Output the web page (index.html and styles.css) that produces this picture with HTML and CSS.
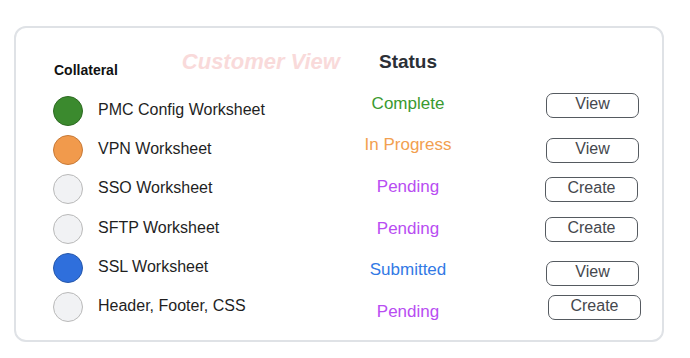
FILE: index.html
```html
<!DOCTYPE html>
<html lang="en">
<head>
<meta charset="utf-8">
<title>Collateral</title>
<link rel="stylesheet" href="styles.css">
</head>
<body>
<div class="card">
  <div class="head">
    <div class="head-col1">
      <span class="collateral-title">Collateral</span>
      <span class="watermark">Customer View</span>
    </div>
    <div class="head-col2">Status</div>
  </div>
  <div class="body">
    <div class="col col-items">
      <div class="item"><span class="dot dot-green"></span><span class="label">PMC Config Worksheet</span></div>
      <div class="item"><span class="dot dot-orange"></span><span class="label">VPN Worksheet</span></div>
      <div class="item"><span class="dot dot-gray"></span><span class="label">SSO Worksheet</span></div>
      <div class="item"><span class="dot dot-gray"></span><span class="label">SFTP Worksheet</span></div>
      <div class="item"><span class="dot dot-blue"></span><span class="label">SSL Worksheet</span></div>
      <div class="item"><span class="dot dot-gray"></span><span class="label">Header, Footer, CSS</span></div>
    </div>
    <div class="col col-status">
      <div class="status s-complete">Complete</div>
      <div class="status s-progress">In Progress</div>
      <div class="status s-pending">Pending</div>
      <div class="status s-pending">Pending</div>
      <div class="status s-submitted">Submitted</div>
      <div class="status s-pending">Pending</div>
    </div>
    <div class="col col-actions">
      <button class="btn">View</button>
      <button class="btn">View</button>
      <button class="btn">Create</button>
      <button class="btn">Create</button>
      <button class="btn">View</button>
      <button class="btn">Create</button>
    </div>
  </div>
</div>
</body>
</html>
```

FILE: styles.css
```css
* { box-sizing: border-box; }
html, body { background: #ffffff; }
body {
  margin: 0;
  padding: 26px 0 0 14px;
  font-family: "Liberation Sans", Arial, sans-serif;
  color: #222;
}
.card {
  width: 650px;
  height: 316px;
  border: 2px solid #dfe2e6;
  border-radius: 12px;
  padding: 21px 0 0 37px;
}
.head {
  display: flex;
  height: 26px;
}
.head-col1 {
  width: 295px;
  display: flex;
  align-items: flex-start;
}
.collateral-title {
  font-size: 14px;
  font-weight: bold;
  line-height: 16px;
  margin-top: 13px;
  color: #111;
  padding-left: 1px;
}
.watermark {
  font-size: 22px;
  line-height: 26px;
  font-weight: bold;
  font-style: italic;
  color: #f9dada;
  margin-left: 64px;
}
.head-col2 {
  width: 120px;
  text-align: center;
  font-size: 19px;
  line-height: 22px;
  margin-top: 2px;
  font-weight: bold;
  color: #2b2f36;
}
.body {
  display: flex;
}
.col { display: flex; flex-direction: column; }
.col-items {
  width: 295px;
  padding-top: 16px;
}
.item {
  height: 39.3px;
  display: flex;
  align-items: center;
}
.dot {
  width: 30px;
  height: 30px;
  border-radius: 50%;
  border: 1px solid #bdbdbd;
  flex: none;
}
.dot-green { background: #3b8a2e; border-color: #2d6a22; }
.dot-orange { background: #f19a4c; border-color: #c77a38; }
.dot-gray { background: #f1f2f4; border-color: #b9b9b9; }
.dot-blue { background: #2f6fdc; border-color: #2657aa; }
.label {
  margin-left: 15px;
  font-size: 16px;
  line-height: 18px;
  margin-bottom: 2px;
  color: #1f1f1f;
}
.col-status {
  width: 120px;
  padding-top: 8px;
}
.status {
  height: 41.6px;
  display: flex;
  align-items: center;
  justify-content: center;
  font-size: 17px;
}
.s-complete { color: #3a9a30; }
.s-progress { color: #f2a050; }
.s-pending { color: #b84df2; }
.s-submitted { color: #3279e5; }
.col-actions {
  margin-left: 78px;
  padding-top: 18px;
  align-items: flex-start;
}
.btn {
  width: 93px;
  height: 25px;
  border: 1.3px solid #555a60;
  border-radius: 7px;
  background: #fff;
  font-family: "Liberation Sans", Arial, sans-serif;
  font-size: 16px;
  line-height: 18px;
  color: #45484d;
  padding: 0 0 3px;
}
.btn:nth-child(2) { margin-top: 20px; }
.btn:nth-child(3) { margin-top: 14px; margin-left: -1px; }
.btn:nth-child(4) { margin-top: 15px; margin-left: -1px; }
.btn:nth-child(5) { margin-top: 19px; }
.btn:nth-child(6) { margin-top: 9px; margin-left: 2px; }
```
